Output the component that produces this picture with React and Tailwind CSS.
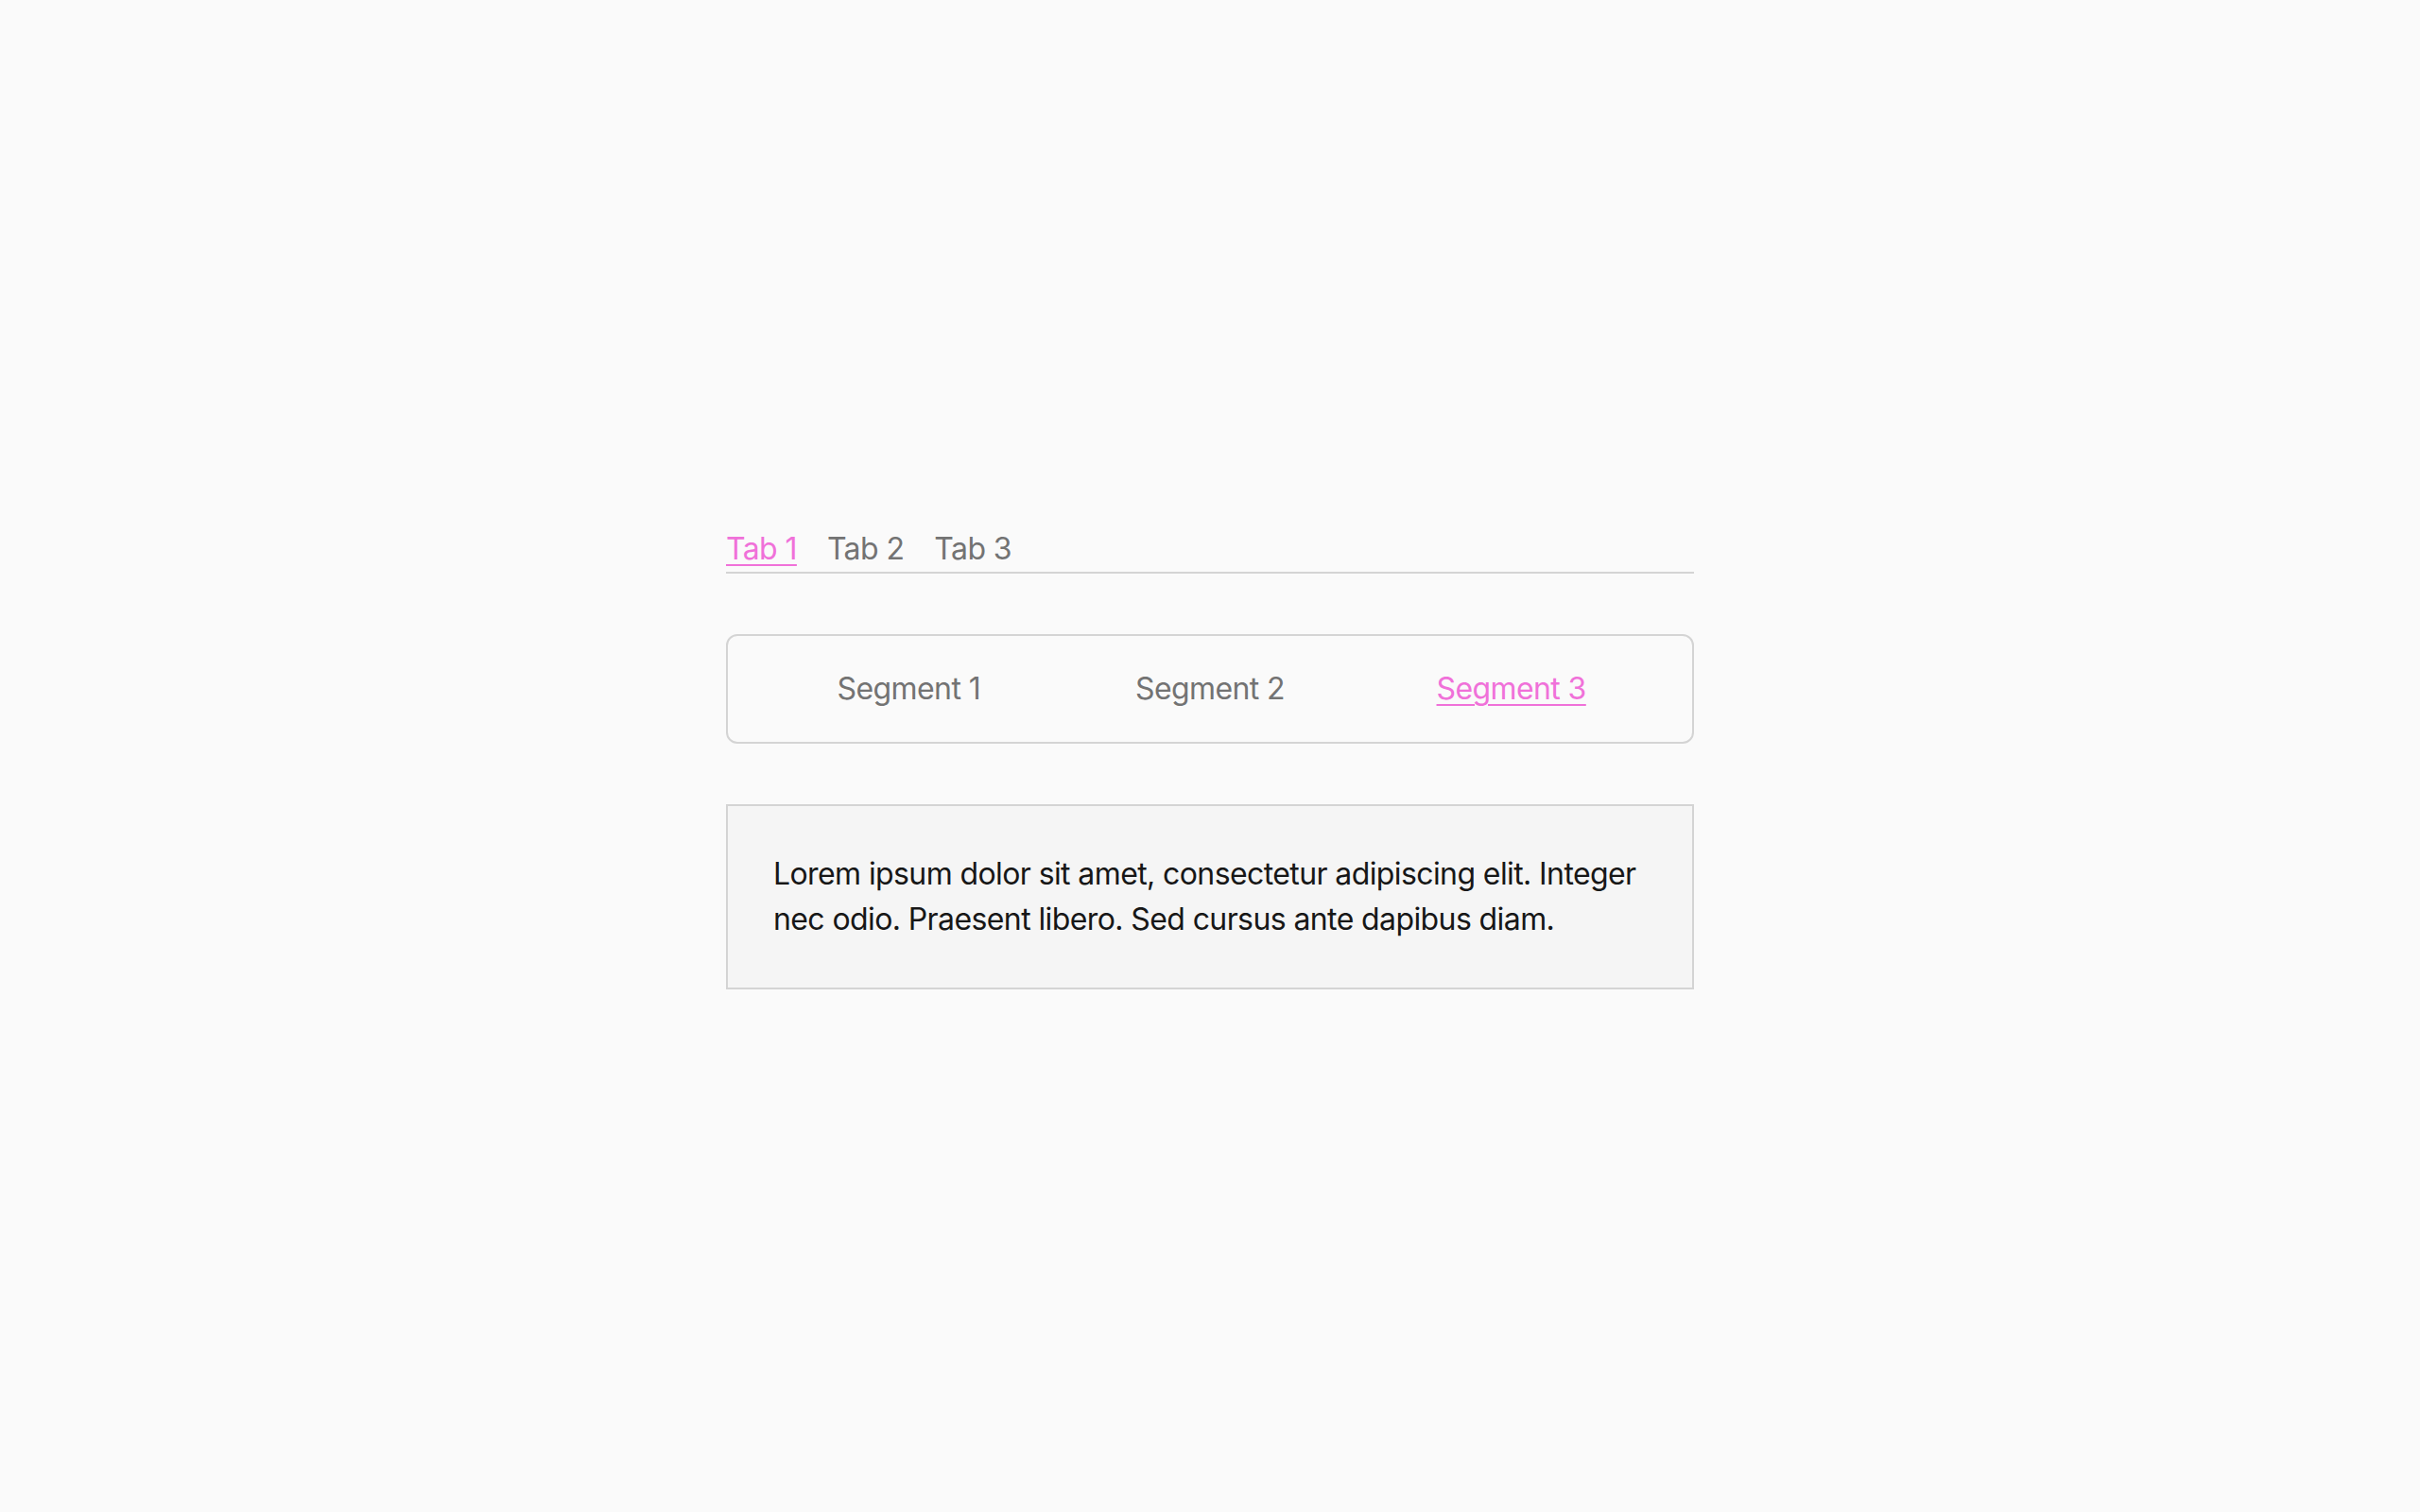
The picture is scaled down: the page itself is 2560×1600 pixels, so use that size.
import React, { useState } from 'react';

const tabs = ['Tab 1', 'Tab 2', 'Tab 3'];
const segments = ['Segment 1', 'Segment 2', 'Segment 3'];

const App = () => {
  const [activeTab, setActiveTab] = useState(0);
  const [activeSegment, setActiveSegment] = useState(2);

  return (
    <div
      className="min-h-screen w-full bg-[#fafafa] flex items-center justify-center pt-[4px] tracking-[-0.6px]"
      style={{ fontFamily: 'Inter, "Noto Sans", sans-serif' }}
    >
      <div className="w-[1024px] flex flex-col gap-[64px]">
        {/* Tabs */}
        <div className="flex gap-[32px] border-b-2 border-[#d4d4d4]">
          {tabs.map((tab, i) => (
            <button
              key={tab}
              type="button"
              onClick={() => setActiveTab(i)}
              className={
                i === activeTab
                  ? 'text-[32px] leading-[48px] text-[#f071d9] underline underline-offset-[5px] decoration-2'
                  : 'text-[32px] leading-[48px] text-[#737373]'
              }
            >
              {tab}
            </button>
          ))}
        </div>

        {/* Segments */}
        <div className="flex rounded-[12px] border-2 border-[#d4d4d4] px-[32px] py-[32px]">
          {segments.map((seg, i) => (
            <button
              key={seg}
              type="button"
              onClick={() => setActiveSegment(i)}
              className={
                i === activeSegment
                  ? 'flex-1 text-center text-[32px] leading-[48px] text-[#f071d9] underline underline-offset-[5px] decoration-2'
                  : 'flex-1 text-center text-[32px] leading-[48px] text-[#737373]'
              }
            >
              {seg}
            </button>
          ))}
        </div>

        {/* Content */}
        <div className="border-2 border-[#d4d4d4] bg-[#f5f5f5] p-[48px]">
          <p className="text-[32px] leading-[48px] text-[#171717]">
            Lorem ipsum dolor sit amet, consectetur adipiscing elit. Integer nec odio. Praesent libero. Sed cursus ante dapibus diam.
          </p>
        </div>
      </div>
    </div>
  );
};

export default App;
